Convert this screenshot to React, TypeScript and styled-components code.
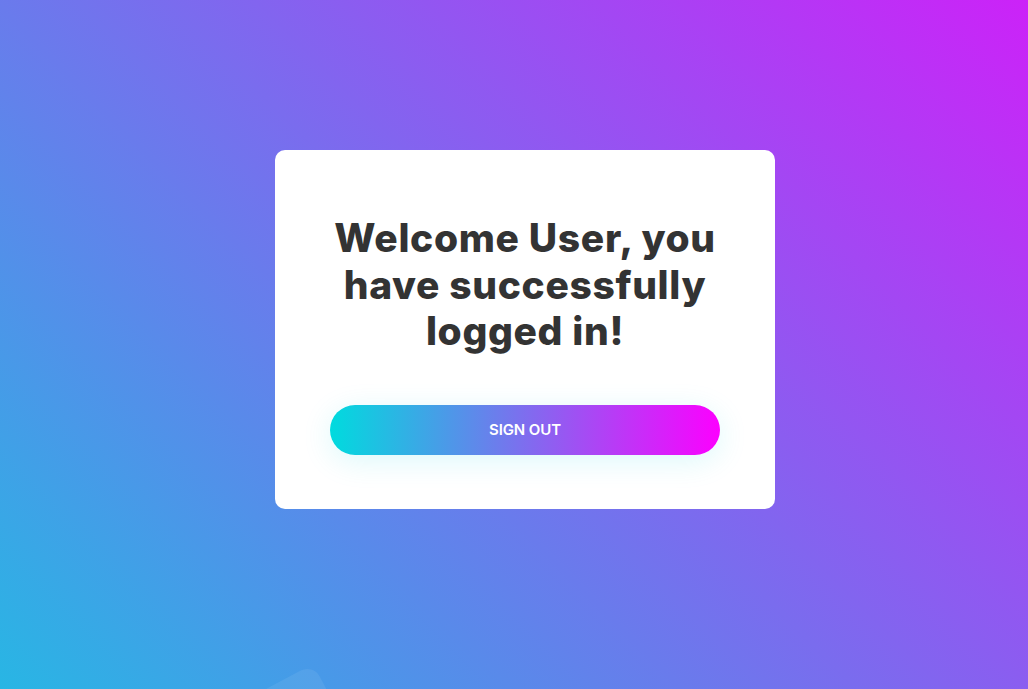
import React from "react";
import styled, { createGlobalStyle } from "styled-components";

const GlobalStyle = createGlobalStyle`
  * { box-sizing: border-box; }
  html, body { margin: 0; padding: 0; }
  body { font-family: Inter, "Liberation Sans", sans-serif; }
`;

const Page = styled.main`
  position: relative;
  width: 100%;
  height: 100vh;
  overflow: hidden;
  display: flex;
  justify-content: center;
  align-items: center;
  padding: 0 0 30px 22px;
  background: linear-gradient(45deg, #28b6e4 0%, #cc22f8 100%);
`;

const Decor = styled.div`
  position: absolute;
  left: 313px;
  top: 664px;
  width: 260px;
  height: 260px;
  border-radius: 14px;
  background: rgba(255, 255, 255, 0.07);
  transform-origin: 0 0;
  transform: rotate(62deg);
`;

const Card = styled.section`
  position: relative;
  z-index: 1;
  width: 500px;
  background: #ffffff;
  border-radius: 10px;
  padding: 65px 55px 54px;
  display: flex;
  flex-direction: column;
  align-items: stretch;
`;

const Title = styled.h1`
  margin: 0;
  font-family: Inter, "Liberation Sans", sans-serif;
  font-weight: 800;
  font-size: 39px;
  line-height: 46.8px;
  letter-spacing: 0.65px;
  color: #333333;
  text-align: center;
`;

const ButtonWrap = styled.div`
  margin-top: 50px;
  border-radius: 25px;
  box-shadow: 0 6px 30px 0 rgba(0, 215, 230, 0.14);
`;

const SignOutButton = styled.button`
  width: 100%;
  height: 50px;
  border: none;
  border-radius: 25px;
  background: linear-gradient(to right, #00dbde, #fc00ff);
  color: #ffffff;
  font-family: Inter, "Liberation Sans", sans-serif;
  font-weight: 600;
  font-size: 15px;
  line-height: 1.5;
  text-transform: uppercase;
  letter-spacing: -0.1px;
  cursor: pointer;
  display: flex;
  align-items: center;
  justify-content: center;
`;

export default function App() {
  return (
    <>
      <GlobalStyle />
      <Page>
        <Decor />
        <Card>
          <Title>Welcome User, you have successfully logged in!</Title>
          <ButtonWrap>
            <SignOutButton type="button">Sign Out</SignOutButton>
          </ButtonWrap>
        </Card>
      </Page>
    </>
  );
}
